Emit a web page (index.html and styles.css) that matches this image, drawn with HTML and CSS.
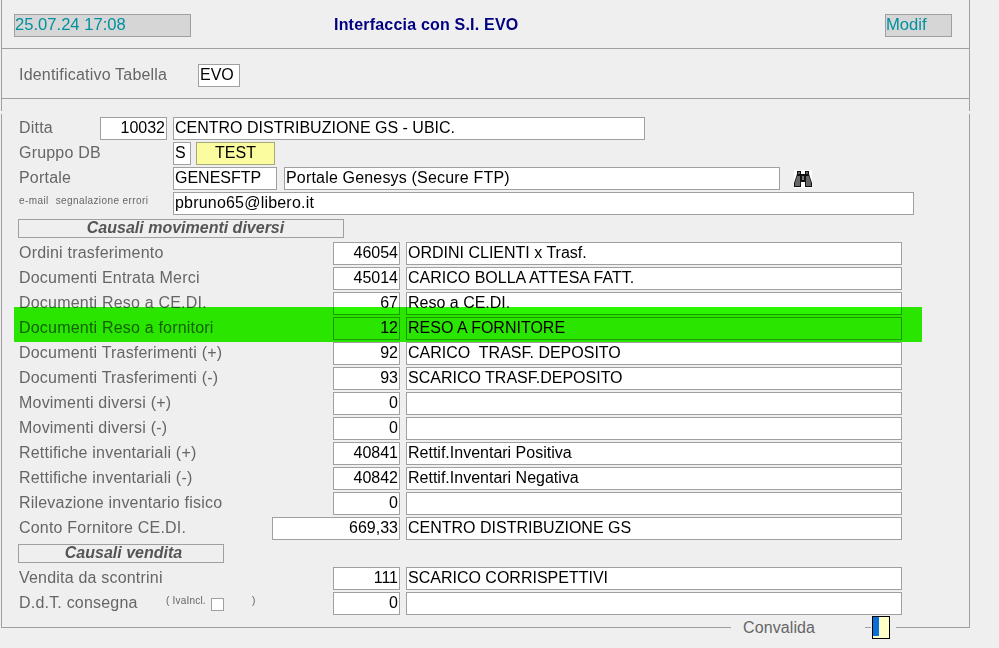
FILE: index.html
```html
<!DOCTYPE html>
<html lang="it">
<head>
<meta charset="utf-8">
<title>Interfaccia con S.I. EVO</title>
<link rel="stylesheet" href="styles.css">
</head>
<body>
<div class="window">
  <div class="top">
    <header class="header">
      <div class="status status-date">25.07.24 17:08</div>
      <h1 class="title">Interfaccia con S.I. EVO</h1>
      <div class="status status-mode">Modif</div>
    </header>
    <div class="id-row">
      <span class="label id-label">Identificativo Tabella</span>
      <span class="field f-id">EVO</span>
    </div>
  </div>
  <main class="main">
    <div class="row"><span class="label l-ditta">Ditta</span><span class="field num f-ditta">10032</span><span class="field f-ditta-name">CENTRO DISTRIBUZIONE GS - UBIC.</span></div>
    <div class="row"><span class="label l-wide">Gruppo DB</span><span class="field f-s">S</span><span class="field f-test">TEST</span></div>
    <div class="row"><span class="label l-wide">Portale</span><span class="field f-portal">GENESFTP</span><span class="field f-portal-name">Portale Genesys (Secure FTP)</span>
      <svg class="binoculars" viewBox="0 0 18 18" width="18" height="18" aria-hidden="true">
        <rect width="18" height="18" fill="#fff"/>
        <path d="M3 1h4v3h4V1h4v3l3 9v4h-7v-5H7v5H0v-4L3 4z" fill="#111"/>
        <path d="M4 2h2v2H4zM12 2h2v2h-2zM3 6h3v10H1v-3zM15 6h-3v10h5v-3z" fill="#666"/>
        <path d="M8 6h2v4H8z" fill="#777"/>
      </svg>
    </div>
    <div class="row"><span class="small-label">e-mail<span class="small-gap"></span>segnalazione errori</span><span class="field f-mail">pbruno65@libero.it</span></div>
    <div class="row"><div class="section s-moves">Causali movimenti diversi</div></div>
    <div class="row"><span class="label l-code">Ordini trasferimento</span><span class="field num f-code">46054</span><span class="field f-desc">ORDINI CLIENTI x Trasf.</span></div>
    <div class="row"><span class="label l-code">Documenti Entrata Merci</span><span class="field num f-code">45014</span><span class="field f-desc">CARICO BOLLA ATTESA FATT.</span></div>
    <div class="row"><span class="label l-code">Documenti Reso a CE.DI.</span><span class="field num f-code">67</span><span class="field f-desc">Reso a CE.DI.</span></div>
    <div class="row is-marked"><span class="label l-code">Documenti Reso a fornitori</span><span class="field num f-code">12</span><span class="field f-desc">RESO A FORNITORE</span></div>
    <div class="row"><span class="label l-code">Documenti Trasferimenti (+)</span><span class="field num f-code">92</span><span class="field f-desc">CARICO&nbsp; TRASF. DEPOSITO</span></div>
    <div class="row"><span class="label l-code">Documenti Trasferimenti (-)</span><span class="field num f-code">93</span><span class="field f-desc">SCARICO TRASF.DEPOSITO</span></div>
    <div class="row"><span class="label l-code">Movimenti diversi (+)</span><span class="field num f-code">0</span><span class="field f-desc"></span></div>
    <div class="row"><span class="label l-code">Movimenti diversi (-)</span><span class="field num f-code">0</span><span class="field f-desc"></span></div>
    <div class="row"><span class="label l-code">Rettifiche inventariali (+)</span><span class="field num f-code">40841</span><span class="field f-desc">Rettif.Inventari Positiva</span></div>
    <div class="row"><span class="label l-code">Rettifiche inventariali (-)</span><span class="field num f-code">40842</span><span class="field f-desc">Rettif.Inventari Negativa</span></div>
    <div class="row"><span class="label l-code">Rilevazione inventario fisico</span><span class="field num f-code">0</span><span class="field f-desc"></span></div>
    <div class="row"><span class="label l-account">Conto Fornitore CE.DI.</span><span class="field num f-account">669,33</span><span class="field f-desc">CENTRO DISTRIBUZIONE GS</span></div>
    <div class="row"><div class="section s-sales">Causali vendita</div></div>
    <div class="row"><span class="label l-code">Vendita da scontrini</span><span class="field num f-code">111</span><span class="field f-desc">SCARICO CORRISPETTIVI</span></div>
    <div class="row"><span class="label l-ddt">D.d.T. consegna</span><span class="iva">( IvaIncl.</span><span class="checkbox"></span><span class="iva iva-close">)</span><span class="field num f-code">0</span><span class="field f-desc"></span></div>
    <div class="highlight"></div>
    <div class="submit">
      <span class="submit-label">Convalida</span>
      <span class="submit-tick"></span>
      <span class="submit-btn"><span class="submit-btn-fill"></span></span>
    </div>
  </main>
</div>
</body>
</html>
```
FILE: styles.css
```css
* { box-sizing: border-box; }
html, body { margin: 0; padding: 0; }
body {
  width: 999px;
  height: 648px;
  overflow: hidden;
  background: #efefef;
  font-family: "Liberation Sans", Arial, sans-serif;
  font-size: 16px;
  color: #000;
}
.window { width: 969px; margin-left: 1px; }
.top {
  height: 111px;
  border-left: 1px solid #a0a0a0;
  border-right: 1px solid #a0a0a0;
}
.header {
  height: 49px;
  padding: 14px 17px 0 12px;
  display: flex;
  align-items: flex-start;
  border-bottom: 1px solid #a0a0a0;
}
.status {
  flex: none;
  height: 23px;
  background: #d6d6d6;
  border: 1px solid #a0a0a0;
  color: #00919e;
  font-size: 16.6px;
  line-height: 19px;
}
.status-date { width: 177px; }
.status-mode { width: 67px; margin-left: auto; }
.title {
  margin: 0 0 0 143px;
  font-size: 16px;
  font-weight: bold;
  letter-spacing: 0.2px;
  color: #000080;
  line-height: 21px;
}
.id-row {
  height: 50px;
  padding: 15px 0 0 17px;
  display: flex;
  align-items: flex-start;
  border-bottom: 1px solid #a0a0a0;
}
.label {
  color: #666;
  line-height: 21px;
  letter-spacing: 0.2px;
  flex: none;
  white-space: nowrap;
}
.id-label { width: 179px; }
.field {
  flex: none;
  display: block;
  height: 23px;
  background: #fff;
  border: 1px solid #a0a0a0;
  padding: 0 1px;
  line-height: 19px;
  white-space: nowrap;
  overflow: hidden;
}
.num { text-align: right; }
.f-id { width: 42px; }
.main {
  position: relative;
  height: 514px;
  margin-top: 3px;
  padding: 3px 0 0 17px;
  border-left: 1px solid #a0a0a0;
  border-right: 1px solid #a0a0a0;
  border-bottom: 1px solid #a0a0a0;
}
.row { display: flex; height: 25px; align-items: flex-start; }
.is-marked .field { background: #efefef; }
.l-ditta { width: 81px; }
.l-wide { width: 154px; }
.l-code { width: 314px; }
.l-account { width: 253px; }
.l-ddt { width: 147px; }
.f-ditta { width: 67px; margin-right: 6px; }
.f-ditta-name { width: 472px; }
.f-s { width: 18px; margin-right: 5px; }
.f-test {
  width: 79px;
  background: #fbfb9f;
  border-color: #a8a878;
  text-align: center;
}
.f-portal { width: 104px; margin-right: 7px; }
.f-portal-name { width: 496px; letter-spacing: 0.18px; }
.binoculars { flex: none; margin: 3px 0 0 14px; }
.small-label {
  width: 154px;
  flex: none;
  font-size: 10px;
  line-height: 18px;
  letter-spacing: 0.4px;
  color: #666;
  white-space: nowrap;
}
.small-gap { display: inline-block; width: 7px; }
.f-mail { width: 741px; letter-spacing: 0.2px; }
.f-code { width: 67px; margin-right: 6px; }
.f-account { width: 128px; margin-right: 6px; }
.f-desc { width: 496px; }
.section {
  margin: 2px 0 0 -1px;
  height: 19px;
  border: 1px solid #a0a0a0;
  font-weight: bold;
  font-style: italic;
  color: #555;
  line-height: 15px;
  text-align: center;
  padding-left: 9px;
}
.s-moves { width: 326px; }
.s-sales { width: 206px; padding-left: 5px; }
.iva {
  flex: none;
  width: 45px;
  font-size: 10px;
  line-height: 18px;
  letter-spacing: 0.2px;
  color: #666;
  white-space: nowrap;
}
.checkbox {
  flex: none;
  width: 13px;
  height: 13px;
  margin-top: 6px;
  background: #fff;
  border: 1px solid #a0a0a0;
}
.iva-close { width: 109px; padding-left: 28px; }
.highlight {
  position: absolute;
  left: 12px;
  top: 193px;
  width: 908px;
  height: 35px;
  background: #2bf500;
  mix-blend-mode: multiply;
}
.submit {
  position: absolute;
  right: 73px;
  bottom: -11px;
  height: 22px;
  width: 165px;
  padding-left: 1px;
  display: flex;
  align-items: center;
  background: #efefef;
}
.submit-label {
  width: 133px;
  color: #666;
  padding-left: 11px;
  line-height: 21px;
  letter-spacing: 0.1px;
  flex: none;
}
.submit-tick { width: 6px; height: 1px; background: #a0a0a0; flex: none; }
.submit-btn {
  display: block;
  flex: none;
  width: 18px;
  height: 23px;
  margin-left: 1px;
  border: 1px solid #000;
  background: #ffffc8;
}
.submit-btn-fill { display: block; width: 6px; height: 19px; background: #0a6fd6; }
```
